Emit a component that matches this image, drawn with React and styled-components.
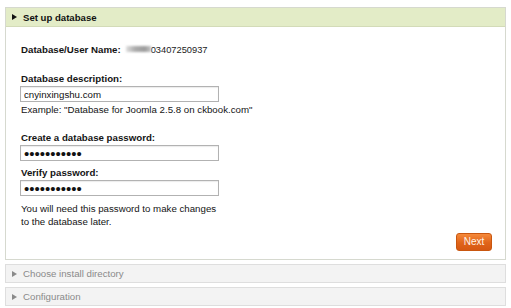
import React from 'react';
import styled, { createGlobalStyle } from 'styled-components';

const GlobalStyle = createGlobalStyle`
    html, body {
        margin: 0;
        padding: 0;
        background: #ffffff;
    }
    body {
        font-family: "Liberation Sans", Arial, sans-serif;
        font-size: 9.7px;
        color: #141414;
    }
`;

const Page = styled.div`
    width: 501px;
    padding: 7px 5px 0 5px;
    display: flex;
    flex-direction: column;
    gap: 4px;
`;

const Panel = styled.div`
    border: 1px solid ${(p) => (p.open ? '#d6d9cf' : '#dedede')};
    background: ${(p) => (p.open ? '#ffffff' : '#f3f3f3')};
`;

const Header = styled.div`
    display: flex;
    align-items: center;
    gap: 6px;
    height: ${(p) => (p.open ? '18px' : '17px')};
    padding-left: 6px;
    background: ${(p) => (p.open ? '#e3ecc7' : '#f3f3f3')};
    border-bottom: ${(p) => (p.open ? '1px solid #d3dbb8' : 'none')};
    font-weight: ${(p) => (p.open ? 'bold' : 'normal')};
    font-size: ${(p) => (p.open ? '9.6px' : '9.7px')};
    color: ${(p) => (p.open ? '#111111' : '#8a8a8a')};
    line-height: 13px;
`;

const Arrow = styled.span`
    width: 0;
    height: 0;
    border-top: 3.5px solid transparent;
    border-bottom: 3.5px solid transparent;
    border-left: 5px solid ${(p) => (p.open ? '#111111' : '#8a8a8a')};
`;

const Body = styled.div`
    display: flex;
    flex-direction: column;
    padding: 16px 13px 8px 15px;
`;

const Line = styled.div`
    line-height: 13px;
    font-weight: ${(p) => (p.bold ? 'bold' : 'normal')};
    margin-top: ${(p) => p.top || 0}px;
`;

const Blur = styled.span`
    display: inline-block;
    vertical-align: middle;
    width: 25px;
    height: 6px;
    margin: 0 0 2px 5px;
    background: linear-gradient(90deg, #e0e0e0, #adadad 35%, #9c9c9c 75%, #c4c4c4);
    filter: blur(0.8px);
`;

const UserId = styled.span`
    font-weight: normal;
    font-size: 9.3px;
    color: #222222;
`;

const Field = styled.input`
    box-sizing: border-box;
    width: 199px;
    height: 16px;
    margin: 1px 0 0 -1px;
    padding: 0 3px;
    border: 1px solid #b2b2b2;
    box-shadow: inset 0 1px 1px rgba(0, 0, 0, 0.08);
    font-family: "Liberation Sans", Arial, sans-serif;
    font-size: ${(p) => (p.type === 'password' ? '15px' : '9.7px')};
    color: #111111;
    outline: none;
`;

const Footer = styled.div`
    display: flex;
    justify-content: flex-end;
    margin-top: 5px;
`;

const NextButton = styled.button`
    width: 36px;
    height: 18px;
    padding: 0;
    border: 1px solid #c9560f;
    border-radius: 3px;
    background: linear-gradient(#f5893a, #e0641a 55%, #d65812);
    color: #fff3e8;
    font-family: "Liberation Sans", Arial, sans-serif;
    font-size: 10px;
    line-height: 16px;
`;

const App = () => (
    <>
        <GlobalStyle />
        <Page>
            <Panel open>
                <Header open>
                    <Arrow open />
                    Set up database
                </Header>
                <Body>
                    <Line bold>
                        Database/User Name:
                        <Blur />
                        <UserId>03407250937</UserId>
                    </Line>
                    <Line bold top={15}>Database description:</Line>
                    <Field type="text" defaultValue="cnyinxingshu.com" readOnly />
                    <Line top={1}>Example: "Database for Joomla 2.5.8 on ckbook.com"</Line>
                    <Line bold top={15}>Create a database password:</Line>
                    <Field type="password" defaultValue="aaaaaaaaaaa" readOnly />
                    <Line bold top={5}>Verify password:</Line>
                    <Field type="password" defaultValue="aaaaaaaaaaa" readOnly />
                    <Line top={6}>You will need this password to make changes</Line>
                    <Line>to the database later.</Line>
                    <Footer>
                        <NextButton>Next</NextButton>
                    </Footer>
                </Body>
            </Panel>
            <Panel>
                <Header>
                    <Arrow />
                    Choose install directory
                </Header>
            </Panel>
            <Panel>
                <Header>
                    <Arrow />
                    Configuration
                </Header>
            </Panel>
        </Page>
    </>
);

export default App;
